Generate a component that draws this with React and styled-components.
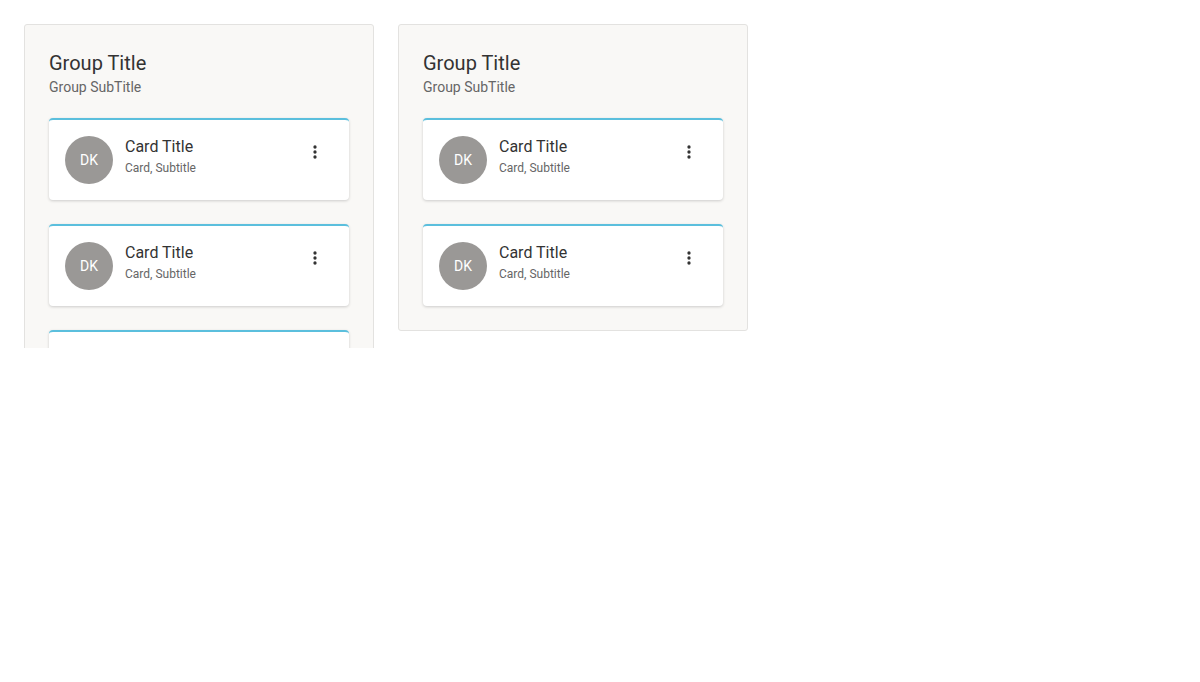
import styled, { createGlobalStyle } from "styled-components";

const GlobalStyle = createGlobalStyle`
  body {
    margin: 0;
    background: #ffffff;
    font-family: Roboto, "Noto Sans", sans-serif;
  }
`;

const Board = styled.div`
  display: flex;
  align-items: flex-start;
  gap: 24px;
  padding: 24px 24px 0;
  height: 348px;
  box-sizing: border-box;
  overflow: hidden;
`;

const Group = styled.section`
  width: 350px;
  box-sizing: border-box;
  padding: 24px;
  background: #f9f8f6;
  border: 1px solid #e3e2e0;
  border-radius: 3px;
  flex-shrink: 0;
`;

const GroupTitle = styled.h2`
  margin: 0;
  font-size: 20px;
  font-weight: 400;
  line-height: 28px;
  color: #333333;
`;

const GroupSubTitle = styled.div`
  font-size: 14px;
  line-height: 20px;
  color: #666666;
`;

const CardList = styled.div`
  display: flex;
  flex-direction: column;
  gap: 24px;
  margin-top: 21px;
`;

const Card = styled.div`
  display: flex;
  align-items: center;
  gap: 12px;
  padding: 16px;
  background: #ffffff;
  border-top: 2px solid #5bbfdd;
  border-radius: 4px;
  box-shadow: 0 1px 3px rgba(0, 0, 0, 0.18);
`;

const Avatar = styled.div`
  width: 48px;
  height: 48px;
  border-radius: 50%;
  background: #9a9896;
  color: #ffffff;
  font-size: 14px;
  display: flex;
  align-items: center;
  justify-content: center;
  flex-shrink: 0;
`;

const CardText = styled.div`
  flex: 1;
  align-self: flex-start;
`;

const CardTitle = styled.div`
  font-size: 16px;
  line-height: 24px;
  color: #333333;
  margin-top: -1px;
`;

const CardSubTitle = styled.div`
  font-size: 12px;
  line-height: 16px;
  color: #666666;
  margin-top: 1px;
`;

const MenuButton = styled.button`
  align-self: flex-start;
  margin: 6px 8px 0 0;
  padding: 0;
  width: 20px;
  height: 20px;
  border: none;
  background: none;
  color: #333333;
  display: flex;
  cursor: pointer;
`;

const MoreVert = () => (
  <svg width="20" height="20" viewBox="0 0 24 24" fill="currentColor">
    <circle cx="12" cy="6" r="2" />
    <circle cx="12" cy="12" r="2" />
    <circle cx="12" cy="18" r="2" />
  </svg>
);

const CardItem = ({ item }) => (
  <Card>
    <Avatar>{item.initials}</Avatar>
    <CardText>
      <CardTitle>{item.title}</CardTitle>
      <CardSubTitle>{item.subtitle}</CardSubTitle>
    </CardText>
    <MenuButton aria-label="more">
      <MoreVert />
    </MenuButton>
  </Card>
);

const card = { initials: "DK", title: "Card Title", subtitle: "Card, Subtitle" };

const groups = [
  { title: "Group Title", subtitle: "Group SubTitle", cards: [card, card, card] },
  { title: "Group Title", subtitle: "Group SubTitle", cards: [card, card] },
];

const App = () => {
  return (
    <>
      <GlobalStyle />
      <Board>
        {groups.map((g, i) => (
          <Group key={i}>
            <GroupTitle>{g.title}</GroupTitle>
            <GroupSubTitle>{g.subtitle}</GroupSubTitle>
            <CardList>
              {g.cards.map((c, j) => (
                <CardItem key={j} item={c} />
              ))}
            </CardList>
          </Group>
        ))}
      </Board>
    </>
  );
};

export default App;
